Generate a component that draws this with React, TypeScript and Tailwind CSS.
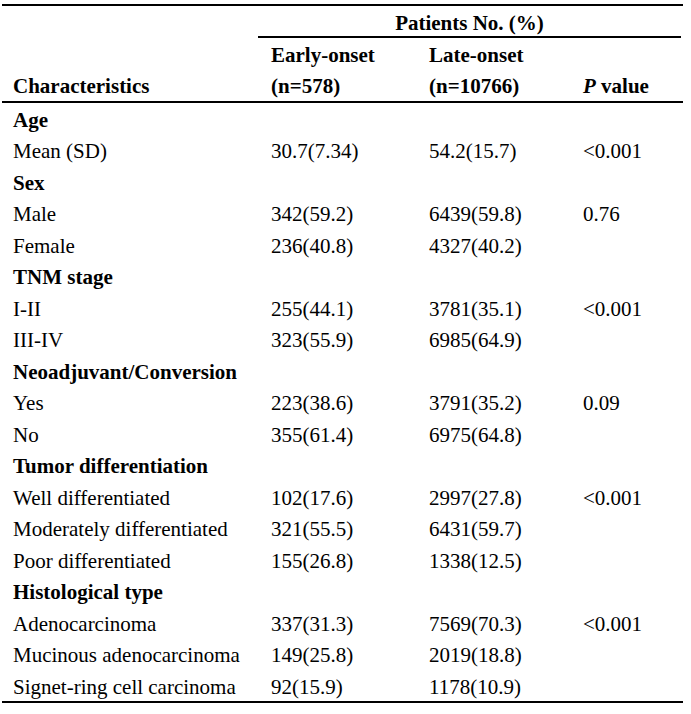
type Row = { label: string; early?: string; late?: string; p?: string; heading?: boolean };

const rows: Row[] = [
  { label: "Age", heading: true },
  { label: "Mean (SD)", early: "30.7(7.34)", late: "54.2(15.7)", p: "<0.001" },
  { label: "Sex", heading: true },
  { label: "Male", early: "342(59.2)", late: "6439(59.8)", p: "0.76" },
  { label: "Female", early: "236(40.8)", late: "4327(40.2)" },
  { label: "TNM stage", heading: true },
  { label: "I-II", early: "255(44.1)", late: "3781(35.1)", p: "<0.001" },
  { label: "III-IV", early: "323(55.9)", late: "6985(64.9)" },
  { label: "Neoadjuvant/Conversion", heading: true },
  { label: "Yes", early: "223(38.6)", late: "3791(35.2)", p: "0.09" },
  { label: "No", early: "355(61.4)", late: "6975(64.8)" },
  { label: "Tumor differentiation", heading: true },
  { label: "Well differentiated", early: "102(17.6)", late: "2997(27.8)", p: "<0.001" },
  { label: "Moderately differentiated", early: "321(55.5)", late: "6431(59.7)" },
  { label: "Poor differentiated", early: "155(26.8)", late: "1338(12.5)" },
  { label: "Histological type", heading: true },
  { label: "Adenocarcinoma", early: "337(31.3)", late: "7569(70.3)", p: "<0.001" },
  { label: "Mucinous adenocarcinoma", early: "149(25.8)", late: "2019(18.8)" },
  { label: "Signet-ring cell carcinoma", early: "92(15.9)", late: "1178(10.9)" },
];

const grid = "grid grid-cols-[258px_158px_154px_109px]";
// text sits a little low in its row, as in the source PDF
const cell = "pl-[11px] pt-[2px] h-[31.5px] leading-[31.5px] whitespace-nowrap";

export default function App() {
  return (
    <div
      className="min-h-[714px] w-[691px] bg-white pt-[4px] text-[21px] text-black"
      style={{ fontFamily: '"Liberation Serif", "Times New Roman", serif' }}
    >
      <div className="ml-[2px] w-[681px] border-t-2 border-b-2 border-black">
        {/* header */}
        <div className={grid}>
          <div />
          <div className="col-span-3 -ml-[2px] border-b-2 border-black pt-[2px] text-center font-bold h-[31.5px] leading-[31.5px]">
            Patients No. (%)
          </div>
        </div>
        <div className={`${grid} border-b-2 border-black font-bold`}>
          <div className="flex flex-col">
            <div className={cell} />
            <div className={cell}>Characteristics</div>
          </div>
          <div className="flex flex-col">
            <div className={cell}>Early-onset</div>
            <div className={cell}>(n=578)</div>
          </div>
          <div className="flex flex-col">
            <div className={cell}>Late-onset</div>
            <div className={cell}>(n=10766)</div>
          </div>
          <div className="flex flex-col">
            <div className={cell} />
            <div className={cell}>
              <span className="italic">P</span> value
            </div>
          </div>
        </div>

        {/* body */}
        {rows.map((r) => (
          <div key={r.label} className={grid}>
            <div className={`${cell} ${r.heading ? "font-bold" : ""}`}>{r.label}</div>
            <div className={cell}>{r.early}</div>
            <div className={cell}>{r.late}</div>
            <div className={cell}>{r.p}</div>
          </div>
        ))}
      </div>
    </div>
  );
}
